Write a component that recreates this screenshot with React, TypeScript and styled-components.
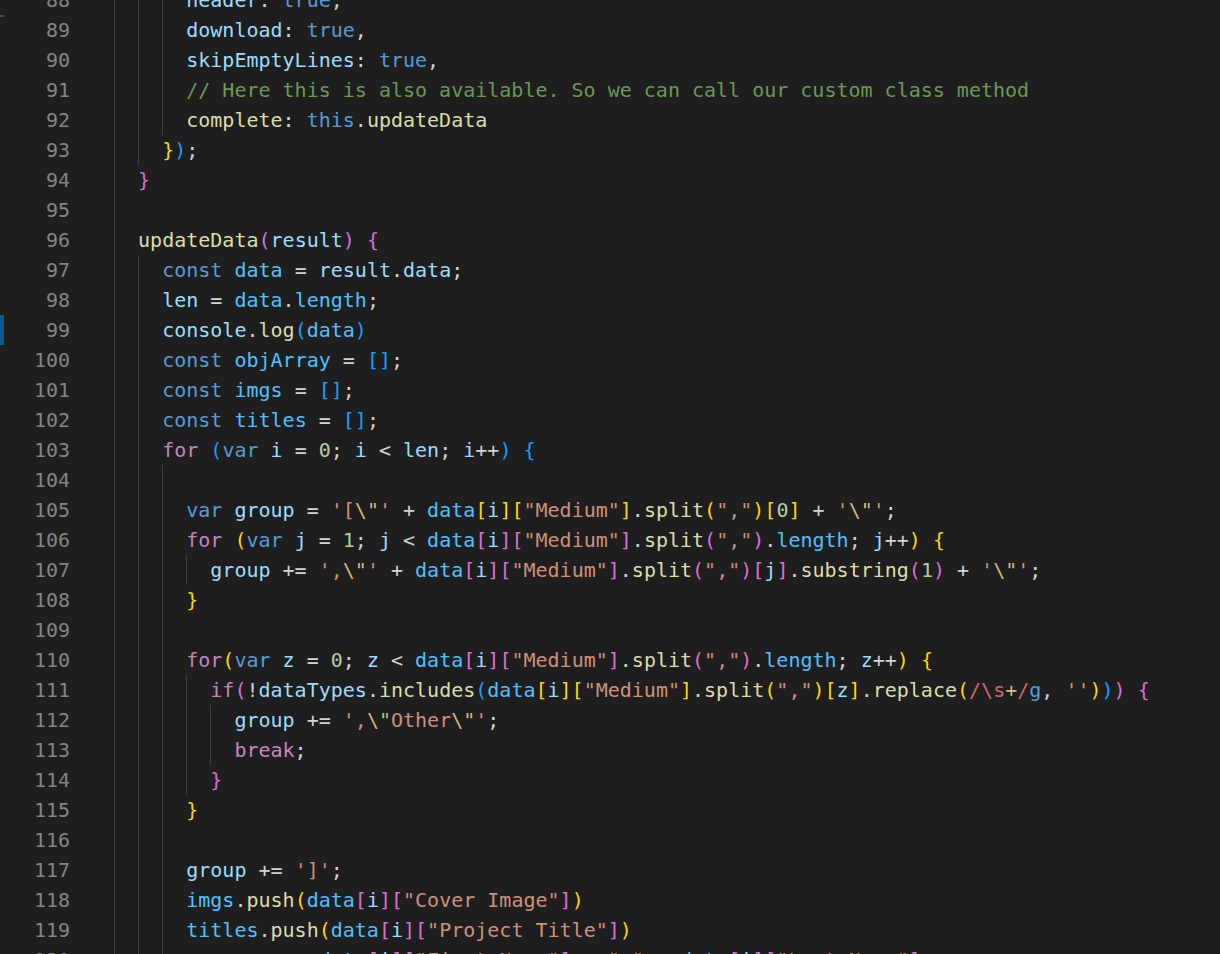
import React from "react";
import styled, { createGlobalStyle } from "styled-components";

const GlobalStyle = createGlobalStyle`
  html, body {
    margin: 0;
    padding: 0;
    background: #1e1e1e;
    overflow: hidden;
  }
`;

const PALETTE: Record<string, string> = {
  k: "#569cd6",
  c: "#c586c0",
  v: "#9cdcfe",
  n: "#4fc1ff",
  f: "#dcdcaa",
  s: "#ce9178",
  e: "#d7ba7d",
  m: "#b5cea8",
  g: "#6a9955",
  p: "#d4d4d4",
  y: "#ffd700",
  o: "#da70d6",
  b: "#179fff",
  r: "#d16969",
};

type Tok = [string, string];
type Line = { n: number; guides: number; toks: Tok[]; mark?: "modified" | "deleted" };

const L = (...a: string[]): Tok[] => {
  const out: Tok[] = [];
  for (let i = 0; i < a.length; i += 2) out.push([a[i], a[i + 1]]);
  return out;
};

const LINES: Line[] = [
  { n: 88, guides: 3, toks: L("v", "header", "p", ": ", "k", "true", "p", ",") },
  { n: 89, guides: 3, mark: "deleted", toks: L("v", "download", "p", ": ", "k", "true", "p", ",") },
  { n: 90, guides: 3, toks: L("v", "skipEmptyLines", "p", ": ", "k", "true", "p", ",") },
  { n: 91, guides: 3, toks: L("g", "// Here this is also available. So we can call our custom class method") },
  { n: 92, guides: 3, toks: L("f", "complete", "p", ": ", "k", "this", "p", ".", "f", "updateData") },
  { n: 93, guides: 2, toks: L("y", "}", "b", ")", "p", ";") },
  { n: 94, guides: 1, toks: L("o", "}") },
  { n: 95, guides: 1, toks: [] },
  { n: 96, guides: 1, toks: L("f", "updateData", "o", "(", "v", "result", "o", ")", "p", " ", "o", "{") },
  { n: 97, guides: 2, toks: L("k", "const", "p", " ", "n", "data", "p", " = ", "v", "result", "p", ".", "v", "data", "p", ";") },
  { n: 98, guides: 2, toks: L("v", "len", "p", " = ", "n", "data", "p", ".", "n", "length", "p", ";") },
  { n: 99, guides: 2, mark: "modified", toks: L("v", "console", "p", ".", "f", "log", "b", "(", "n", "data", "b", ")") },
  { n: 100, guides: 2, toks: L("k", "const", "p", " ", "n", "objArray", "p", " = ", "b", "[]", "p", ";") },
  { n: 101, guides: 2, toks: L("k", "const", "p", " ", "n", "imgs", "p", " = ", "b", "[]", "p", ";") },
  { n: 102, guides: 2, toks: L("k", "const", "p", " ", "n", "titles", "p", " = ", "b", "[]", "p", ";") },
  {
    n: 103,
    guides: 2,
    toks: L("c", "for", "p", " ", "b", "(", "k", "var", "p", " ", "v", "i", "p", " = ", "m", "0", "p", "; ", "v", "i", "p", " < ", "v", "len", "p", "; ", "v", "i", "p", "++", "b", ")", "p", " ", "b", "{"),
  },
  { n: 104, guides: 3, toks: [] },
  {
    n: 105,
    guides: 3,
    toks: L(
      "k", "var", "p", " ", "v", "group", "p", " = ", "s", "'[", "e", '\\"', "s", "'", "p", " + ",
      "n", "data", "y", "[", "v", "i", "y", "]", "y", "[", "s", '"Medium"', "y", "]", "p", ".", "f", "split",
      "y", "(", "s", '","', "y", ")", "y", "[", "m", "0", "y", "]", "p", " + ", "s", "'", "e", '\\"', "s", "'", "p", ";"
    ),
  },
  {
    n: 106,
    guides: 3,
    toks: L(
      "c", "for", "p", " ", "y", "(", "k", "var", "p", " ", "v", "j", "p", " = ", "m", "1", "p", "; ", "v", "j", "p", " < ",
      "n", "data", "o", "[", "v", "i", "o", "]", "o", "[", "s", '"Medium"', "o", "]", "p", ".", "f", "split", "o", "(", "s", '","', "o", ")",
      "p", ".", "n", "length", "p", "; ", "v", "j", "p", "++", "y", ")", "p", " ", "y", "{"
    ),
  },
  {
    n: 107,
    guides: 4,
    toks: L(
      "v", "group", "p", " += ", "s", "',", "e", '\\"', "s", "'", "p", " + ",
      "n", "data", "o", "[", "v", "i", "o", "]", "o", "[", "s", '"Medium"', "o", "]", "p", ".", "f", "split", "o", "(", "s", '","', "o", ")",
      "o", "[", "v", "j", "o", "]", "p", ".", "f", "substring", "o", "(", "m", "1", "o", ")", "p", " + ", "s", "'", "e", '\\"', "s", "'", "p", ";"
    ),
  },
  { n: 108, guides: 3, toks: L("y", "}") },
  { n: 109, guides: 3, toks: [] },
  {
    n: 110,
    guides: 3,
    toks: L(
      "c", "for", "y", "(", "k", "var", "p", " ", "v", "z", "p", " = ", "m", "0", "p", "; ", "v", "z", "p", " < ",
      "n", "data", "o", "[", "v", "i", "o", "]", "o", "[", "s", '"Medium"', "o", "]", "p", ".", "f", "split", "o", "(", "s", '","', "o", ")",
      "p", ".", "n", "length", "p", "; ", "v", "z", "p", "++", "y", ")", "p", " ", "y", "{"
    ),
  },
  {
    n: 111,
    guides: 4,
    toks: L(
      "c", "if", "o", "(", "p", "!", "v", "dataTypes", "p", ".", "f", "includes", "b", "(",
      "n", "data", "y", "[", "v", "i", "y", "]", "y", "[", "s", '"Medium"', "y", "]", "p", ".", "f", "split", "y", "(", "s", '","', "y", ")",
      "y", "[", "v", "z", "y", "]", "p", ".", "f", "replace", "y", "(", "r", "/\\s", "e", "+", "r", "/", "k", "g", "p", ", ", "s", "''",
      "y", ")", "b", ")", "o", ")", "p", " ", "o", "{"
    ),
  },
  {
    n: 112,
    guides: 5,
    toks: L("v", "group", "p", " += ", "s", "',", "e", '\\"', "s", "Other", "e", '\\"', "s", "'", "p", ";"),
  },
  { n: 113, guides: 5, toks: L("c", "break", "p", ";") },
  { n: 114, guides: 4, toks: L("o", "}") },
  { n: 115, guides: 3, toks: L("y", "}") },
  { n: 116, guides: 3, toks: [] },
  { n: 117, guides: 3, toks: L("v", "group", "p", " += ", "s", "']'", "p", ";") },
  {
    n: 118,
    guides: 3,
    toks: L("n", "imgs", "p", ".", "f", "push", "y", "(", "n", "data", "o", "[", "v", "i", "o", "]", "o", "[", "s", '"Cover Image"', "o", "]", "y", ")"),
  },
  {
    n: 119,
    guides: 3,
    toks: L("n", "titles", "p", ".", "f", "push", "y", "(", "n", "data", "o", "[", "v", "i", "o", "]", "o", "[", "s", '"Project Title"', "o", "]", "y", ")"),
  },
  {
    n: 120,
    guides: 3,
    toks: L(
      "k", "var", "p", " ", "v", "name", "p", " = ", "n", "data", "o", "[", "v", "i", "o", "]", "o", "[", "s", '"First Name"', "o", "]",
      "p", " + ", "s", '" "', "p", " + ", "n", "data", "o", "[", "v", "i", "o", "]", "o", "[", "s", '"Last Name"', "o", "]", "p", ";"
    ),
  },
];

const Editor = styled.div`
  width: 1220px;
  height: 954px;
  overflow: hidden;
  background: #1e1e1e;
  font-family: "DejaVu Sans Mono", "Liberation Mono", monospace;
  font-size: 20px;
  line-height: 30px;
`;

const Scroller = styled.div`
  display: flex;
  margin-top: -15px;
`;

const Gutter = styled.div`
  flex: none;
  width: 114px;
  display: flex;
  flex-direction: column;
`;

const GutterRow = styled.div`
  display: grid;
  grid-template-columns: 4px 1fr;
  height: 30px;
  padding-right: 44px;
`;

const Marker = styled.span<{ $kind?: "modified" | "deleted" }>`
  align-self: ${(p) => (p.$kind === "deleted" ? "start" : "stretch")};
  height: ${(p) => (p.$kind === "deleted" ? "2px" : "auto")};
  background: ${(p) =>
    p.$kind === "modified" ? "#0e5a8a" : p.$kind === "deleted" ? "#4a4a4a" : "transparent"};
`;

const LineNo = styled.span`
  text-align: right;
  color: #858585;
`;

const Code = styled.div`
  flex: 1;
  display: flex;
  flex-direction: column;
`;

const CodeLine = styled.div`
  height: 30px;
  white-space: pre;
`;

const Guide = styled.span`
  display: inline-block;
  vertical-align: top;
  width: 2ch;
  height: 30px;
  box-shadow: inset 1px 0 0 #404040;
`;

const Token = styled.span<{ $c: string }>`
  color: ${(p) => p.$c};
`;

export default function App() {
  return (
    <>
      <GlobalStyle />
      <Editor>
        <Scroller>
          <Gutter>
            {LINES.map((l) => (
              <GutterRow key={l.n}>
                <Marker $kind={l.mark} />
                <LineNo>{l.n}</LineNo>
              </GutterRow>
            ))}
          </Gutter>
          <Code>
            {LINES.map((l) => (
              <CodeLine key={l.n}>
                {Array.from({ length: l.guides }).map((_, i) => (
                  <Guide key={i} />
                ))}
                {l.toks.map(([k, t], i) => (
                  <Token key={i} $c={PALETTE[k]}>
                    {t}
                  </Token>
                ))}
              </CodeLine>
            ))}
          </Code>
        </Scroller>
      </Editor>
    </>
  );
}
